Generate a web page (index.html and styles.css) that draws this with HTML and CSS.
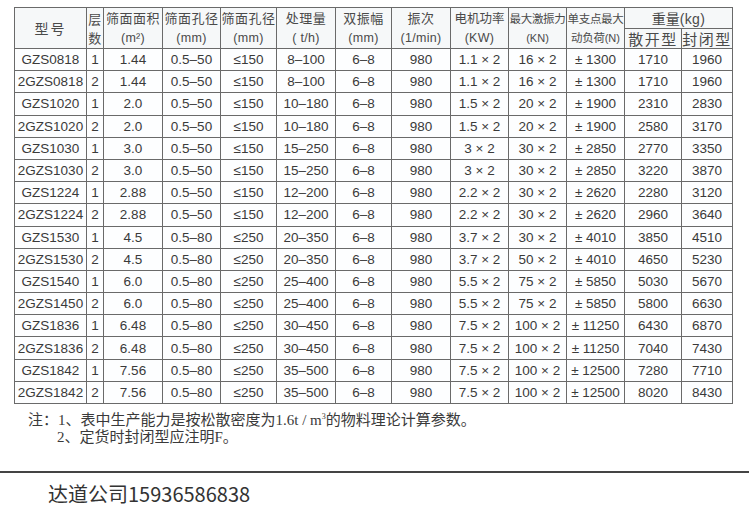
FILE: index.html
```html
<!DOCTYPE html>
<html lang="zh">
<head>
<meta charset="utf-8">
<link rel="stylesheet" href="styles.css">
</head>
<body>
<div class="page">
  <table class="spec">
    <colgroup>
      <col style="width:72px"><col style="width:17px"><col style="width:59px"><col style="width:58px"><col style="width:56px"><col style="width:59px"><col style="width:56px"><col style="width:59px"><col style="width:58px"><col style="width:58px"><col style="width:58px"><col style="width:57px"><col style="width:51px">
    </colgroup>
    <thead>
      <tr class="h1">
        <th rowspan="2" class="big">型号</th>
        <th rowspan="2" class="cn">层<br>数</th>
        <th rowspan="2" class="cn">筛面面积<br><span class="u">(m²)</span></th>
        <th rowspan="2" class="cn">筛面孔径<br><span class="u">(mm)</span></th>
        <th rowspan="2" class="cn">筛面孔径<br><span class="u">(mm)</span></th>
        <th rowspan="2" class="cn">处理量<br><span class="u">( t/h)</span></th>
        <th rowspan="2" class="cn">双振幅<br><span class="u">(mm)</span></th>
        <th rowspan="2" class="cn">振次<br><span class="u">(1/min)</span></th>
        <th rowspan="2" class="cn sm">电机功率<br><span class="u">(KW)</span></th>
        <th rowspan="2" class="cn xs">最大激振力<br><span class="u xsu">(KN)</span></th>
        <th rowspan="2" class="cn xs">单支点最大<br>动负荷<span class="xsu">(N)</span></th>
        <th colspan="2" class="wt">重量<span class="u">(kg)</span></th>
      </tr>
      <tr class="h2">
        <th class="big2">散开型</th>
        <th class="big2">封闭型</th>
      </tr>
    </thead>
    <tbody>
      <tr><td>GZS0818</td><td>1</td><td>1.44</td><td>0.5–50</td><td>≤150</td><td>8–100</td><td>6–8</td><td>980</td><td>1.1 × 2</td><td>16 × 2</td><td>± 1300</td><td>1710</td><td>1960</td></tr>
      <tr><td>2GZS0818</td><td>2</td><td>1.44</td><td>0.5–50</td><td>≤150</td><td>8–100</td><td>6–8</td><td>980</td><td>1.1 × 2</td><td>16 × 2</td><td>± 1300</td><td>1710</td><td>1960</td></tr>
      <tr><td>GZS1020</td><td>1</td><td>2.0</td><td>0.5–50</td><td>≤150</td><td>10–180</td><td>6–8</td><td>980</td><td>1.5 × 2</td><td>20 × 2</td><td>± 1900</td><td>2310</td><td>2830</td></tr>
      <tr><td>2GZS1020</td><td>2</td><td>2.0</td><td>0.5–50</td><td>≤150</td><td>10–180</td><td>6–8</td><td>980</td><td>1.5 × 2</td><td>20 × 2</td><td>± 1900</td><td>2580</td><td>3170</td></tr>
      <tr><td>GZS1030</td><td>1</td><td>3.0</td><td>0.5–50</td><td>≤150</td><td>15–250</td><td>6–8</td><td>980</td><td>3 × 2</td><td>30 × 2</td><td>± 2850</td><td>2770</td><td>3350</td></tr>
      <tr><td>2GZS1030</td><td>2</td><td>3.0</td><td>0.5–50</td><td>≤150</td><td>15–250</td><td>6–8</td><td>980</td><td>3 × 2</td><td>30 × 2</td><td>± 2850</td><td>3220</td><td>3870</td></tr>
      <tr><td>GZS1224</td><td>1</td><td>2.88</td><td>0.5–50</td><td>≤150</td><td>12–200</td><td>6–8</td><td>980</td><td>2.2 × 2</td><td>30 × 2</td><td>± 2620</td><td>2280</td><td>3120</td></tr>
      <tr><td>2GZS1224</td><td>2</td><td>2.88</td><td>0.5–50</td><td>≤150</td><td>12–200</td><td>6–8</td><td>980</td><td>2.2 × 2</td><td>30 × 2</td><td>± 2620</td><td>2960</td><td>3640</td></tr>
      <tr><td>GZS1530</td><td>1</td><td>4.5</td><td>0.5–80</td><td>≤250</td><td>20–350</td><td>6–8</td><td>980</td><td>3.7 × 2</td><td>30 × 2</td><td>± 4010</td><td>3850</td><td>4510</td></tr>
      <tr><td>2GZS1530</td><td>2</td><td>4.5</td><td>0.5–80</td><td>≤250</td><td>20–350</td><td>6–8</td><td>980</td><td>3.7 × 2</td><td>50 × 2</td><td>± 4010</td><td>4650</td><td>5230</td></tr>
      <tr><td>GZS1540</td><td>1</td><td>6.0</td><td>0.5–80</td><td>≤250</td><td>25–400</td><td>6–8</td><td>980</td><td>5.5 × 2</td><td>75 × 2</td><td>± 5850</td><td>5030</td><td>5670</td></tr>
      <tr><td>2GZS1450</td><td>2</td><td>6.0</td><td>0.5–80</td><td>≤250</td><td>25–400</td><td>6–8</td><td>980</td><td>5.5 × 2</td><td>75 × 2</td><td>± 5850</td><td>5800</td><td>6630</td></tr>
      <tr><td>GZS1836</td><td>1</td><td>6.48</td><td>0.5–80</td><td>≤250</td><td>30–450</td><td>6–8</td><td>980</td><td>7.5 × 2</td><td>100 × 2</td><td>± 11250</td><td>6430</td><td>6870</td></tr>
      <tr><td>2GZS1836</td><td>2</td><td>6.48</td><td>0.5–80</td><td>≤250</td><td>30–450</td><td>6–8</td><td>980</td><td>7.5 × 2</td><td>100 × 2</td><td>± 11250</td><td>7040</td><td>7430</td></tr>
      <tr><td>GZS1842</td><td>1</td><td>7.56</td><td>0.5–80</td><td>≤250</td><td>35–500</td><td>6–8</td><td>980</td><td>7.5 × 2</td><td>100 × 2</td><td>± 12500</td><td>7280</td><td>7710</td></tr>
      <tr><td>2GZS1842</td><td>2</td><td>7.56</td><td>0.5–80</td><td>≤250</td><td>35–500</td><td>6–8</td><td>980</td><td>7.5 × 2</td><td>100 × 2</td><td>± 12500</td><td>8020</td><td>8430</td></tr>
    </tbody>
  </table>
  <div class="notes">
    <p class="n1">注：1、表中生产能力是按松散密度为1.6t / m<sup>3</sup>的物料理论计算参数。</p>
    <p class="n2">2、定货时封闭型应注明F。</p>
  </div>
</div>
<div class="rule"></div>
<div class="footer">达道公司15936586838</div>
</body>
</html>
```

FILE: styles.css
```css
html, body {
  margin: 0;
  padding: 0;
  background: #ffffff;
}

.page {
  padding: 7px 0 0 14px;
}

.spec {
  border-collapse: collapse;
  table-layout: fixed;
  width: 718px;
  font-family: "Liberation Sans", Arial, "Noto Sans CJK SC", sans-serif;
  color: #3a3a3a;
  border: 1.5px solid #555;
}

.spec th,
.spec td {
  border: 1px solid #6a6a6a;
  padding: 0;
  text-align: center;
  vertical-align: middle;
  white-space: nowrap;
  overflow: hidden;
}

.spec td {
  font-size: 13.5px;
  height: 21.2px;
  background: #fdfeff;
}

.spec th {
  font-family: "Noto Sans CJK SC", "Liberation Sans", sans-serif;
  font-weight: 400;
  background: #f6f8f9;
  color: #4a4a4a;
}

.h1 { height: 21px; }
.h2 { height: 20px; }

.big {
  font-size: 14px;
  letter-spacing: 2px;
}

.cn {
  font-size: 13px;
  line-height: 19px;
  letter-spacing: 0.5px;
}

.cn.sm { font-size: 12.5px; letter-spacing: 0; }
.cn.xs { font-size: 11.5px; letter-spacing: -0.3px; }

.u {
  font-family: "Liberation Sans", Arial, sans-serif;
  font-size: 12.5px;
  font-weight: normal;
  letter-spacing: 0.3px;
}

.xsu {
  font-family: "Liberation Sans", Arial, sans-serif;
  font-size: 11px;
  letter-spacing: 0;
}

.wt {
  font-size: 14px;
  line-height: 18px;
}

.wt .u {
  font-size: 14px;
}

.big2 {
  font-size: 15px;
  line-height: 18px;
  letter-spacing: 1.5px;
}

.notes {
  font-family: "Liberation Serif", "Noto Sans CJK SC", serif;
  font-size: 15px;
  line-height: 17px;
  color: #3a3a3a;
  margin-top: 8px;
}

.notes p {
  margin: 0;
}

.n1 {
  padding-left: 14px;
}

.n2 {
  padding-left: 43px;
}

.notes sup {
  font-size: 8px;
  line-height: 0;
  vertical-align: 6px;
}

.rule {
  margin-top: 25px;
  height: 2px;
  background: #444;
}

.footer {
  font-family: "Noto Sans CJK SC", sans-serif;
  font-size: 20px;
  line-height: 26px;
  color: #333;
  padding: 8px 0 0 48px;
}
```
